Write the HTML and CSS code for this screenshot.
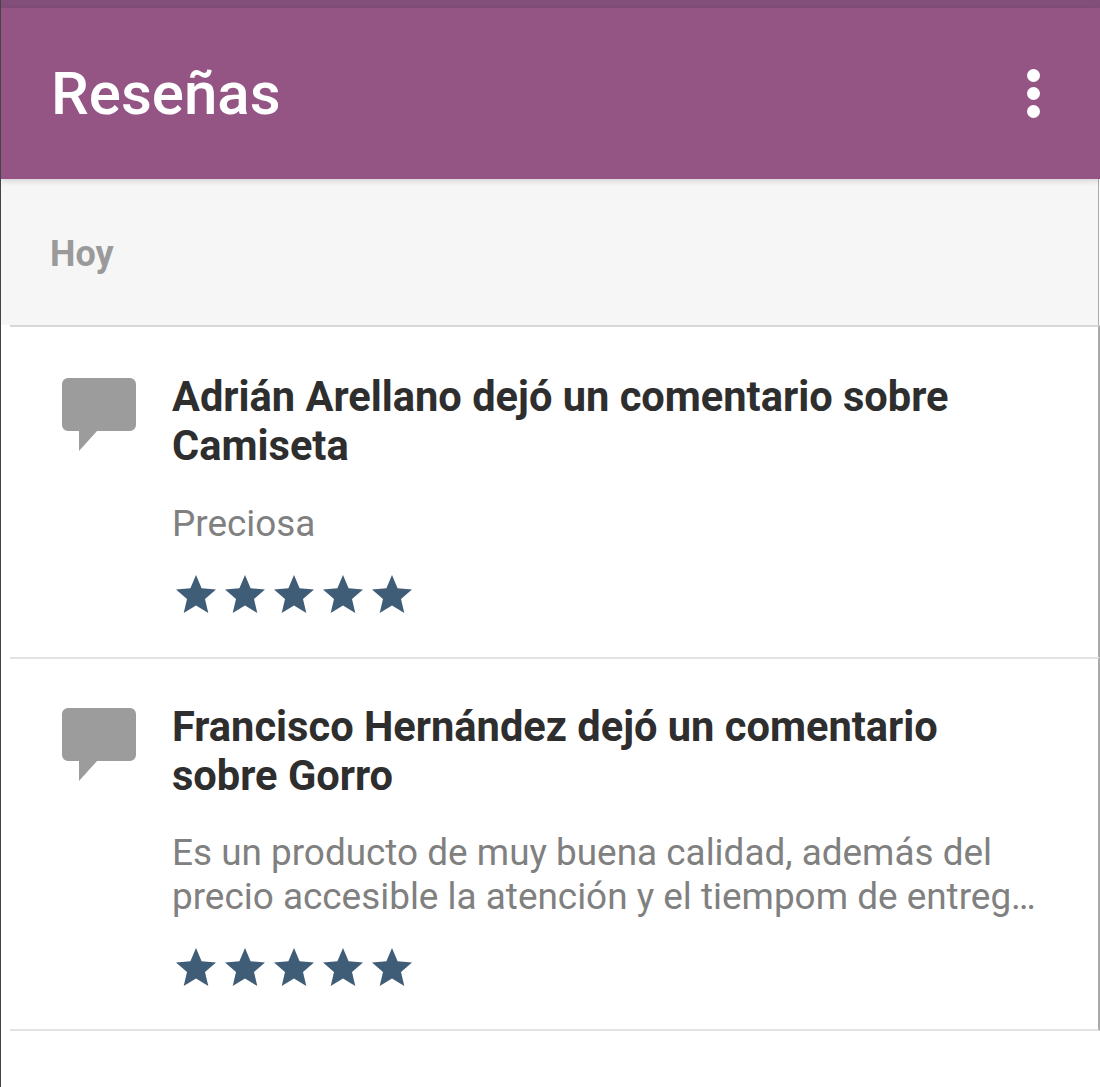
FILE: index.html
```html
<!DOCTYPE html>
<html lang="es">
<head>
    <meta charset="UTF-8">
    <title>Reseñas</title>
    <link rel="stylesheet" href="styles.css">
</head>
<body>
    <svg class="defs" width="0" height="0">
        <symbol id="star" viewBox="0 0 40 38">
            <path d="M20 0l5.600 13.300L40 14.500 29 24l3.300 14L20 30.500 7.700 38 11 24 0 14.500l14.400-1.200z"/>
        </symbol>
        <symbol id="bubble" viewBox="0 0 74 73">
            <path d="M6 0h62a6 6 0 0 1 6 6v41a6 6 0 0 1-6 6H35L17 73V53H6a6 6 0 0 1-6-6V6a6 6 0 0 1 6-6z"/>
        </symbol>
    </svg>

    <div class="app">
        <div class="status-bar"></div>
        <header class="toolbar">
            <h1>Reseñas</h1>
            <div class="menu"><span></span><span></span><span></span></div>
        </header>

        <div class="section-head">Hoy</div>

        <div class="item first">
            <svg class="bubble"><use href="#bubble"/></svg>
            <div class="item-body">
                <h2>Adrián Arellano dejó un comentario sobre Camiseta</h2>
                <p>Preciosa</p>
                <div class="stars">
                    <svg><use href="#star"/></svg>
                    <svg><use href="#star"/></svg>
                    <svg><use href="#star"/></svg>
                    <svg><use href="#star"/></svg>
                    <svg><use href="#star"/></svg>
                </div>
            </div>
        </div>

        <div class="item second">
            <svg class="bubble"><use href="#bubble"/></svg>
            <div class="item-body">
                <h2>Francisco Hernández dejó un comentario sobre Gorro</h2>
                <p>Es un producto de muy buena calidad, además del<br>precio accesible la atención y el tiempom de entreg…</p>
                <div class="stars">
                    <svg><use href="#star"/></svg>
                    <svg><use href="#star"/></svg>
                    <svg><use href="#star"/></svg>
                    <svg><use href="#star"/></svg>
                    <svg><use href="#star"/></svg>
                </div>
            </div>
        </div>
    </div>
</body>
</html>
```

FILE: styles.css
```css
* {
    box-sizing: border-box;
}

body {
    margin: 0;
    background: #fff;
    font-family: Roboto, "Liberation Sans", sans-serif;
}

.defs {
    position: absolute;
}

.app {
    height: 1087px;
    overflow: hidden;
    border-left: 1px solid #444;
}

.status-bar {
    height: 8px;
    background: #824f7a;
}

.toolbar {
    height: 171px;
    padding: 0 60px 0 50px;
    background: #945585;
    display: flex;
    justify-content: space-between;
    align-items: center;
    box-shadow: 0 2px 6px rgba(0, 0, 0, 0.15);
    position: relative;
}

.toolbar h1 {
    margin: 0;
    color: #fff;
    font-size: 60px;
    font-weight: 500;
    line-height: 60px;
}

.menu {
    display: flex;
    flex-direction: column;
    gap: 5px;
}

.menu span {
    width: 13px;
    height: 13px;
    border-radius: 50%;
    background: #fff;
}

.section-head {
    height: 146px;
    padding: 54px 0 0 49px;
    margin-right: 1px;
    background: #f6f6f6;
    border-right: 1px solid #aaa;
    color: #9a9a9a;
    font-size: 36px;
    font-weight: 700;
    line-height: 42px;
}

.item {
    margin-left: 9px;
    padding: 0 60px 0 52px;
    display: flex;
    border-top: 2px solid #e2e2e2;
    border-right: 2px solid #aaa;
}

.first {
    border-top-color: #d8d8d8;
    height: 332px;
    padding-top: 51px;
}

.second {
    height: 374px;
    padding-top: 49px;
    border-bottom: 2px solid #e2e2e2;
}

.bubble {
    width: 74px;
    height: 73px;
    flex-shrink: 0;
    fill: #9c9c9c;
}

.item-body {
    margin-left: 36px;
    flex: 1;
}

.item-body h2 {
    margin: -6px 0 0;
    color: #2e2e2e;
    font-size: 41.6px;
    font-weight: 700;
    line-height: 49px;
}

.item-body p {
    margin: 31px 0 0;
    color: #808080;
    font-size: 36.9px;
    line-height: 44px;
    white-space: nowrap;
}

.first p {
    margin-top: 32px;
}

.stars {
    display: flex;
    gap: 9px;
    margin: 29px 0 0 4px;
}

.stars svg {
    width: 40px;
    height: 38px;
    fill: #405d78;
}
```
